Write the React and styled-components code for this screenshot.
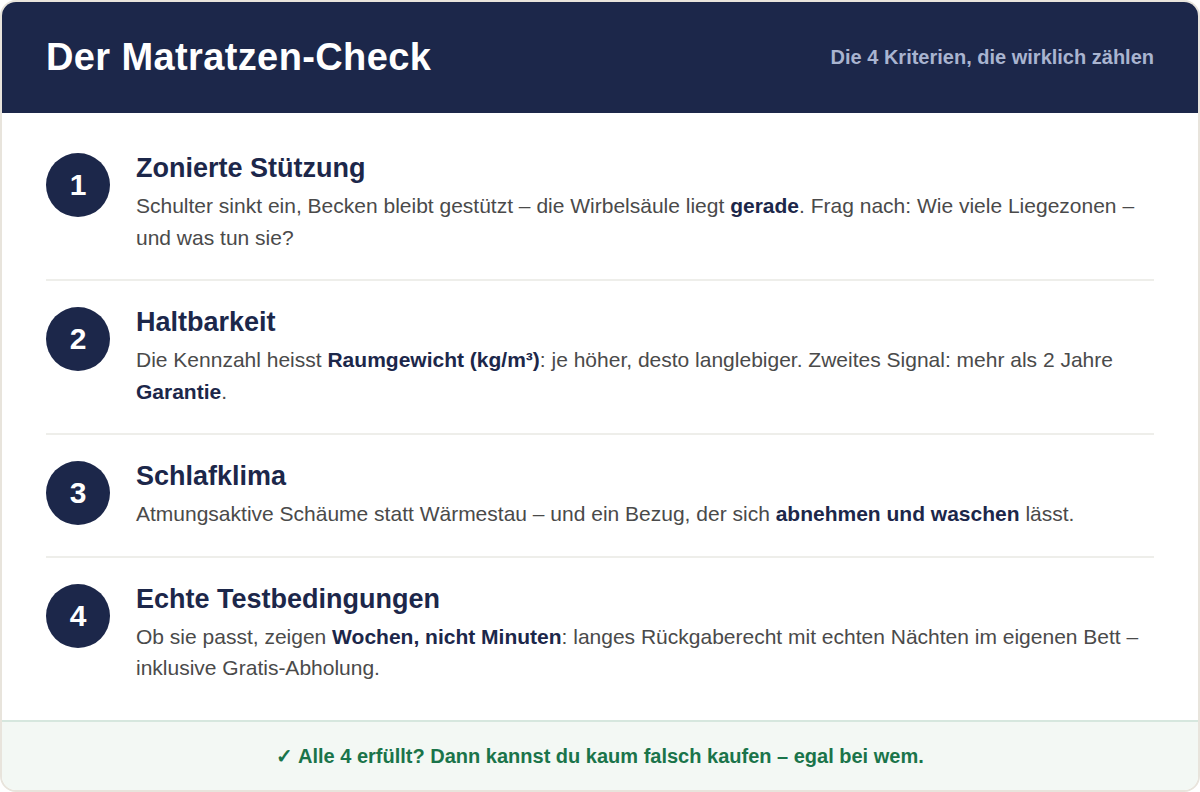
import styled, { createGlobalStyle } from "styled-components"

const GlobalStyle = createGlobalStyle`
    html, body {
        margin: 0;
        padding: 0;
        background: #fff;
    }
    * {
        box-sizing: border-box;
    }
`

const criteria = [
    {
        title: "Zonierte Stützung",
        text: <>Schulter sinkt ein, Becken bleibt gestützt – die Wirbelsäule liegt <strong>gerade</strong>. Frag nach: Wie viele Liegezonen – und was tun sie?</>,
    },
    {
        title: "Haltbarkeit",
        text: <>Die Kennzahl heisst <strong>Raumgewicht (kg/m³)</strong>: je höher, desto langlebiger. Zweites Signal: mehr als 2 Jahre <strong>Garantie</strong>.</>,
    },
    {
        title: "Schlafklima",
        text: <>Atmungsaktive Schäume statt Wärmestau – und ein Bezug, der sich <strong>abnehmen und waschen</strong> lässt.</>,
    },
    {
        title: "Echte Testbedingungen",
        text: <>Ob sie passt, zeigen <strong>Wochen, nicht Minuten</strong>: langes Rückgaberecht mit echten Nächten im eigenen Bett – inklusive Gratis-Abholung.</>,
    },
]

export default function App() {
    return (
        <Card>
            <GlobalStyle />
            <Header>
                <h1>Der Matratzen-Check</h1>
                <span>Die 4 Kriterien, die wirklich zählen</span>
            </Header>
            <List>
                {criteria.map((item, i) => (
                    <Row key={item.title}>
                        <Badge>{i + 1}</Badge>
                        <Content>
                            <h2>{item.title}</h2>
                            <p>{item.text}</p>
                        </Content>
                    </Row>
                ))}
            </List>
            <Footer>✓ Alle 4 erfüllt? Dann kannst du kaum falsch kaufen – egal bei wem.</Footer>
        </Card>
    )
}

const Card = styled.div`
    width: 1200px;
    height: 792px;
    display: flex;
    flex-direction: column;
    overflow: hidden;
    background: #ffffff;
    border: 2px solid #e8e4dc;
    border-radius: 16px;
    font-family: "Liberation Sans", Arial, sans-serif;
`
const Header = styled.div`
    height: 111px;
    flex: none;
    display: flex;
    align-items: center;
    justify-content: space-between;
    padding: 0 44px;
    background: #1c274a;
    h1 {
        margin: 0;
        font-size: 38px;
        font-weight: 700;
        letter-spacing: 0.38px;
        color: #ffffff;
    }
    span {
        font-size: 20px;
        font-weight: 700;
        color: #a9b4d0;
    }
`
const List = styled.div`
    flex: 1;
    padding: 14px 44px 0;
`
const Row = styled.div`
    display: flex;
    gap: 26px;
    padding: 26px 0;
    border-bottom: 2px solid #eeeeea;
    &:last-child {
        border-bottom: none;
    }
`
const Badge = styled.div`
    width: 64px;
    height: 64px;
    flex: none;
    display: flex;
    align-items: center;
    justify-content: center;
    border-radius: 50%;
    background: #1c274a;
    color: #ffffff;
    font-size: 30px;
    font-weight: 700;
`
const Content = styled.div`
    flex: 1;
    h2 {
        margin: 0 0 7px;
        font-size: 27px;
        line-height: 30px;
        font-weight: 700;
        color: #1c274a;
    }
    p {
        margin: 0;
        font-size: 21px;
        line-height: 31.5px;
        color: #4a4a4a;
    }
    strong {
        color: #1c274a;
    }
`
const Footer = styled.div`
    height: 70px;
    flex: none;
    display: flex;
    align-items: center;
    justify-content: center;
    background: #f3f8f4;
    border-top: 2px solid #d6e7de;
    font-size: 20px;
    font-weight: 700;
    color: #1a744a;
`
